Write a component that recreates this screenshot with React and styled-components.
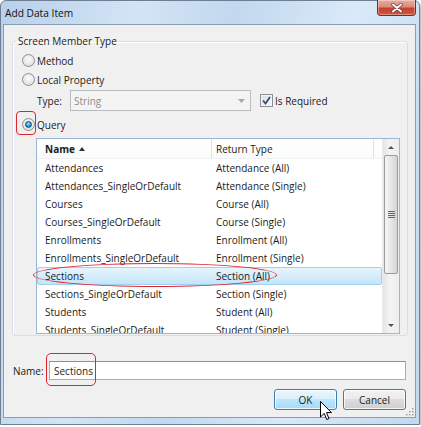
import React from "react";
import styled, { createGlobalStyle } from "styled-components";

const Global = createGlobalStyle`
  html, body { margin: 0; padding: 0; background: #ffffff; }
  body {
    font-family: "Open Sans", "Noto Sans", sans-serif;
    font-size: 10px;
    color: #1b1b1b;
  }
  * { box-sizing: border-box; }
`;

const Window = styled.div`
  position: relative;
  width: 420px;
  height: 425px;
  display: flex;
  flex-direction: column;
  padding: 0 3px 6px 2px;
  border: 1px solid #6f7f92;
  border-radius: 6px 6px 0 0;
  background: linear-gradient(100deg, #b8d0ea 0%, #d3e4f5 28%, #c2d8ee 48%, #d9e9f8 72%, #c4d9ee 100%);
  box-shadow: 1px 2px 3px rgba(0, 0, 0, 0.35);
`;

const TitleBar = styled.div`
  height: 23px;
  display: flex;
  align-items: center;
  padding-left: 2px;
`;

const Title = styled.span`
  font-size: 10.2px;
  color: #111;
`;

const CloseButton = styled.div`
  margin-left: auto;
  align-self: flex-start;
  width: 39px;
  height: 16px;
  margin-right: 0px;
  margin-top: -1px;
  border: 1px solid #7a2a20;
  border-top: none;
  border-radius: 0 0 4px 4px;
  background: linear-gradient(#e8ab9f 0%, #dc8c7e 45%, #c5412d 55%, #d0553f 100%);
  box-shadow: inset 0 0 0 1px rgba(255, 255, 255, 0.35);
  display: flex;
  align-items: center;
  justify-content: center;
`;

const Client = styled.div`
  position: relative;
  flex: 1;
  background: #f0f0f0;
  border: 1px solid #8d9db1;
  padding: 9px 7px 0 8px;
  display: flex;
  flex-direction: column;
`;

const Group = styled.fieldset`
  margin: 0;
  padding: 0 7px 1px 3px;
  border: 1px solid #d5dfe5;
  border-radius: 3px;
  box-shadow: inset 1px 1px 0 #fff;
`;

const Legend = styled.legend`
  padding: 0 2px;
  line-height: 14px;
  font-size: 10px;
`;

const GroupBody = styled.div`
  padding: 3px 0 0 6px;
  display: flex;
  flex-direction: column;
`;

const OptionRow = styled.label`
  position: relative;
  height: 19px;
  display: flex;
  align-items: center;
  gap: 2px;
  margin-top: ${(p) => p.$top || 0}px;
`;

const Radio = styled.span`
  position: relative;
  width: 13px;
  height: 13px;
  border-radius: 50%;
  border: 1px solid #8f9090;
  background: radial-gradient(circle at 50% 40%, #fbfbfb 0%, #e9e9e9 55%, #d0d0d0 100%);
  &::after {
    content: "";
    display: ${(p) => (p.$checked ? "block" : "none")};
    position: absolute;
    left: 2px;
    top: 2px;
    width: 7px;
    height: 7px;
    border-radius: 50%;
    background: radial-gradient(circle at 45% 35%, #a8e4ff 0%, #39a0dc 45%, #11598f 100%);
    border: 1px solid #1f4f78;
    box-sizing: border-box;
  }
`;

const TypeRow = styled.div`
  height: 21px;
  margin-top: 1px;
  padding-left: 15px;
  display: flex;
  align-items: center;
`;

const TypeLabel = styled.span`
  width: 33px;
`;

const Combo = styled.div`
  width: 181px;
  height: 21px;
  border: 1px solid #b7bcc1;
  background: #f4f4f4;
  color: #8d8d8d;
  display: flex;
  align-items: center;
  padding: 0 5px 0 3px;
  justify-content: space-between;
`;

const CheckRow = styled.label`
  margin-left: 9px;
  display: flex;
  align-items: center;
  gap: 2px;
`;

const CheckBox = styled.span`
  width: 13px;
  height: 13px;
  border: 1px solid #8f8f8f;
  background: linear-gradient(135deg, #dcdcdc, #fbfbfb);
  box-shadow: inset 0 0 0 1px #f4f4f4;
  display: flex;
  align-items: center;
  justify-content: center;
`;

const Highlight = styled.span`
  position: absolute;
  border: 1.5px solid #e0242d;
  border-radius: ${(p) => p.$radius || "4px"};
  pointer-events: none;
`;

const ListWrap = styled.div`
  position: relative;
  margin: 4px 0 0 14px;
`;

const List = styled.div`
  height: 196px;
  border: 1px solid #9bb7d3;
  background: #fff;
  display: flex;
  overflow: hidden;
`;

const ListMain = styled.div`
  flex: 1;
  display: flex;
  flex-direction: column;
  overflow: hidden;
`;

const Header = styled.div`
  height: 20px;
  flex: none;
  display: flex;
  background: linear-gradient(#ffffff, #fafbfc);
  border-bottom: 1px solid #f0f0f0;
`;

const HeaderCell = styled.div`
  width: ${(p) => p.$w}px;
  padding-left: ${(p) => p.$pad}px;
  display: flex;
  align-items: center;
  gap: 4px;
  border-right: 1px solid #dfe2e5;
  font-weight: ${(p) => (p.$bold ? 700 : 400)};
`;

const Row = styled.div`
  height: 18px;
  flex: none;
  display: grid;
  grid-template-columns: 174px 1fr;
  align-items: center;
  border: 1px solid ${(p) => (p.$selected ? "#9fd2f0" : "transparent")};
  border-radius: 2px;
  background: ${(p) => (p.$selected ? "linear-gradient(#e6f5fd, #c4e5f9)" : "transparent")};
`;

const Cell = styled.span`
  padding-left: ${(p) => p.$pad}px;
  white-space: nowrap;
`;

const ScrollBar = styled.div`
  width: 17px;
  flex: none;
  display: flex;
  flex-direction: column;
  background: linear-gradient(90deg, #e4e4e4, #f3f3f3 40%, #eeeeee);
  border-left: 1px solid #ececec;
`;

const ScrollArrow = styled.div`
  height: 16px;
  flex: none;
  display: flex;
  align-items: center;
  justify-content: center;
`;

const Track = styled.div`
  flex: 1;
  display: flex;
  flex-direction: column;
`;

const Thumb = styled.div`
  height: 119px;
  margin: 0 1px;
  border: 1px solid #9b9b9b;
  border-radius: 2px;
  background: linear-gradient(90deg, #f6f6f6, #e6e6e6 50%, #d4d4d4);
  display: flex;
  flex-direction: column;
  align-items: center;
  justify-content: center;
  gap: 1px;
`;

const Grip = styled.span`
  width: 7px;
  height: 1px;
  background: #666;
`;

const NameRow = styled.div`
  position: relative;
  margin-top: 25px;
  display: flex;
  align-items: center;
  padding: 0 2px 0 1px;
`;

const NameLabel = styled.span`
  width: 36px;
`;

const TextBox = styled.div`
  flex: 1;
  height: 19px;
  border: 1px solid #abadb3;
  border-top-color: #8e9297;
  background: #fff;
  display: flex;
  align-items: center;
  padding-left: 4px;
`;

const ButtonRow = styled.div`
  margin-top: 9px;
  display: flex;
  justify-content: flex-end;
  gap: 6px;
  padding-right: 2px;
`;

const Button = styled.div`
  width: 63px;
  height: 21px;
  border-radius: 3px;
  display: flex;
  align-items: center;
  justify-content: center;
  border: 1px solid ${(p) => (p.$primary ? "#3c7fb1" : "#707070")};
  background: ${(p) =>
    p.$primary
      ? "linear-gradient(#eaf6fd 0%, #d9f0fc 45%, #bee6fd 50%, #a7d9f5 100%)"
      : "linear-gradient(#f2f2f2 0%, #ebebeb 45%, #dddddd 50%, #cfcfcf 100%)"};
  box-shadow: inset 0 0 0 1px rgba(255, 255, 255, 0.75);
`;

const ResizeGrip = styled.svg`
  position: absolute;
  right: 1px;
  bottom: 1px;
`;

const Cursor = styled.svg`
  position: absolute;
  left: 319px;
  top: 400px;
`;

const rows = [
  ["Attendances", "Attendance (All)"],
  ["Attendances_SingleOrDefault", "Attendance (Single)"],
  ["Courses", "Course (All)"],
  ["Courses_SingleOrDefault", "Course (Single)"],
  ["Enrollments", "Enrollment (All)"],
  ["Enrollments_SingleOrDefault", "Enrollment (Single)"],
  ["Sections", "Section (All)"],
  ["Sections_SingleOrDefault", "Section (Single)"],
  ["Students", "Student (All)"],
  ["Students_SingleOrDefault", "Student (Single)"],
];

export default function App() {
  return (
    <>
      <Global />
      <Window>
        <TitleBar>
          <Title>Add Data Item</Title>
          <CloseButton>
            <svg width="12" height="10" viewBox="0 0 12 10">
              <path d="M2 1.5 L10 8.5 M10 1.5 L2 8.5" stroke="#5a3a36" strokeWidth="3.4" strokeLinecap="round" />
              <path d="M2 1.5 L10 8.5 M10 1.5 L2 8.5" stroke="#ffffff" strokeWidth="2" strokeLinecap="round" />
            </svg>
          </CloseButton>
        </TitleBar>
        <Client>
          <Group>
            <Legend>Screen Member Type</Legend>
            <GroupBody>
              <OptionRow>
                <Radio />
                <span>Method</span>
              </OptionRow>
              <OptionRow>
                <Radio />
                <span>Local Property</span>
              </OptionRow>
              <TypeRow>
                <TypeLabel>Type:</TypeLabel>
                <Combo>
                  <span>String</span>
                  <svg width="7" height="4" viewBox="0 0 7 4">
                    <path d="M0 0 H7 L3.5 4 Z" fill="#a9a9a9" />
                  </svg>
                </Combo>
                <CheckRow>
                  <CheckBox>
                    <svg width="9" height="9" viewBox="0 0 9 9">
                      <path d="M1 4.5 L3.5 7.5 L8 1" stroke="#2f4f86" strokeWidth="1.8" fill="none" />
                    </svg>
                  </CheckBox>
                  <span>Is Required</span>
                </CheckRow>
              </TypeRow>
              <OptionRow $top={4}>
                <Radio $checked />
                <span>Query</span>
                <Highlight style={{ left: -6, top: -4, width: 20, height: 24 }} />
              </OptionRow>
              <ListWrap>
                <List>
                  <ListMain>
                    <Header>
                      <HeaderCell $w={175} $pad={8} $bold>
                        Name
                        <svg width="6" height="4" viewBox="0 0 6 4">
                          <path d="M0 4 H6 L3 0 Z" fill="#333" />
                        </svg>
                      </HeaderCell>
                      <HeaderCell $w={162} $pad={4}>Return Type</HeaderCell>
                    </Header>
                    {rows.map(([n, t]) => (
                      <Row key={n} $selected={n === "Sections"}>
                        <Cell $pad={7}>{n}</Cell>
                        <Cell $pad={4}>{t}</Cell>
                      </Row>
                    ))}
                  </ListMain>
                  <ScrollBar>
                    <ScrollArrow>
                      <svg width="6" height="3" viewBox="0 0 6 3">
                        <path d="M0 3 H6 L3 0 Z" fill="#555" />
                      </svg>
                    </ScrollArrow>
                    <Track>
                      <Thumb>
                        <Grip />
                        <Grip />
                        <Grip />
                        <Grip />
                      </Thumb>
                    </Track>
                    <ScrollArrow>
                      <svg width="6" height="3" viewBox="0 0 6 3">
                        <path d="M0 0 H6 L3 3 Z" fill="#555" />
                      </svg>
                    </ScrollArrow>
                  </ScrollBar>
                </List>
                <Highlight $radius="50%" style={{ left: -3, top: 125, width: 244, height: 24 }} />
              </ListWrap>
            </GroupBody>
          </Group>
          <NameRow>
            <NameLabel>Name:</NameLabel>
            <TextBox>Sections</TextBox>
            <Highlight $radius="5px" style={{ left: 34, top: -8, width: 50, height: 33 }} />
          </NameRow>
          <ButtonRow>
            <Button $primary>OK</Button>
            <Button>Cancel</Button>
          </ButtonRow>
          <ResizeGrip width="10" height="10" viewBox="0 0 10 10">
            {[
              [8, 2], [8, 5], [8, 8], [5, 5], [5, 8], [2, 8],
            ].map(([x, y]) => (
              <rect key={`${x}-${y}`} x={x} y={y} width="1.5" height="1.5" fill="#a0a0a0" />
            ))}
          </ResizeGrip>
        </Client>
        <Cursor width="13" height="20" viewBox="0 0 13 20">
          <path d="M0.5 0.5 L0.5 16 L4.2 12.4 L6.8 18.6 L9 17.6 L6.5 11.6 L11.5 11.6 Z" fill="#ffffff" stroke="#000" strokeWidth="1" strokeLinejoin="round" />
        </Cursor>
      </Window>
    </>
  );
}
